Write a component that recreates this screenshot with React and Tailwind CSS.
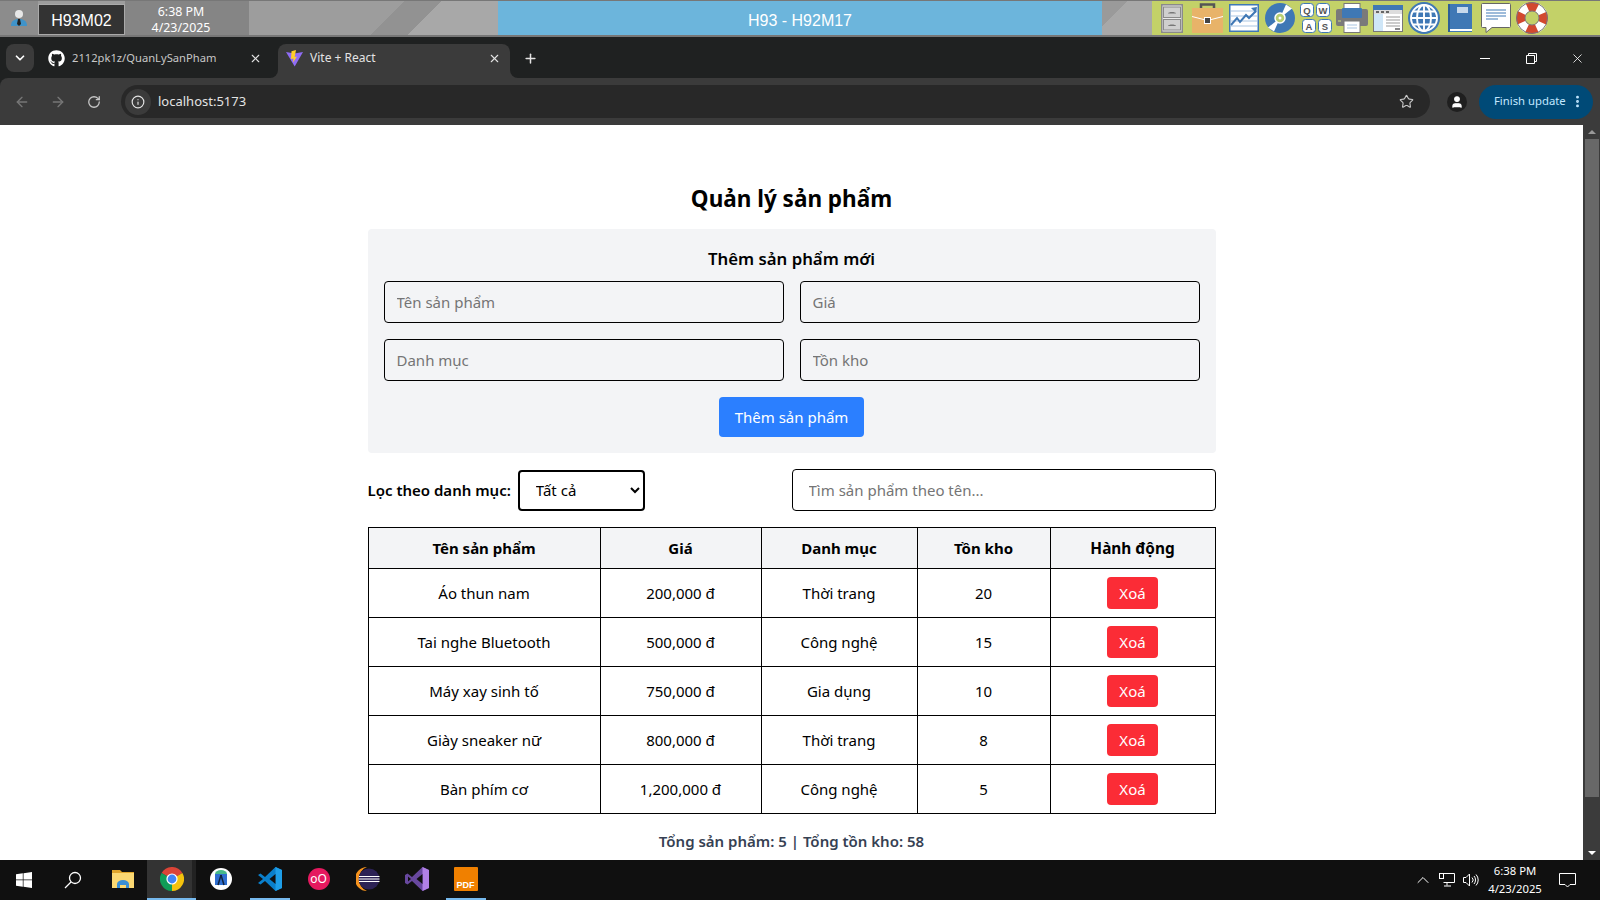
import { ArrowLeft, ArrowRight, ChevronDown, ChevronUp, Info, MoreVertical, Plus, RotateCw, Star, User, X } from 'lucide-react';
import { FaGithub } from 'react-icons/fa';

const products = [
  { name: 'Áo thun nam', price: '200,000 đ', category: 'Thời trang', stock: 20 },
  { name: 'Tai nghe Bluetooth', price: '500,000 đ', category: 'Công nghệ', stock: 15 },
  { name: 'Máy xay sinh tố', price: '750,000 đ', category: 'Gia dụng', stock: 10 },
  { name: 'Giày sneaker nữ', price: '800,000 đ', category: 'Thời trang', stock: 8 },
  { name: 'Bàn phím cơ', price: '1,200,000 đ', category: 'Công nghệ', stock: 5 },
];

const BLUE = '#3f78b5';

function Cabinet() {
  return (
    <svg width="22" height="29" viewBox="0 0 22 29">
      <rect x="0.750" y="0.750" width="20.500" height="27.500" fill="#e8e8e8" stroke="#8a8a8a" strokeWidth="1.500" />
      <rect x="2.500" y="3" width="17" height="10.500" fill="#cfcfcf" stroke="#8a8a8a" />
      <rect x="2.500" y="15.500" width="17" height="10.500" fill="#cfcfcf" stroke="#8a8a8a" />
      <path d="M7 9.500c0-2 8-2 8 0zM7 22c0-2 8-2 8 0z" fill="#777" />
    </svg>
  );
}

function Briefcase() {
  return (
    <svg width="31" height="30" viewBox="0 0 31 30">
      <path d="M9 6V1.500h13V6" fill="none" stroke="#555" strokeWidth="2.500" />
      <rect x="0" y="5" width="31" height="25" fill="#e8b369" />
      <path d="M0 13.500l15.500 4 15.500-4" fill="none" stroke="#fff" strokeWidth="1" />
      <rect x="12.500" y="14.500" width="6" height="6" fill="#444" stroke="#fff" />
    </svg>
  );
}

function ChartIcon() {
  return (
    <svg width="30" height="28" viewBox="0 0 30 28">
      <rect x="0.750" y="0.750" width="28.500" height="26.500" fill="#fff" stroke={BLUE} strokeWidth="1.500" />
      <path d="M2 7h26M2 12h26M2 17h26M2 22h26" stroke="#a9c5e2" />
      <path d="M2 21l6-7 3 4 6-7 3 3 7-7" fill="none" stroke={BLUE} strokeWidth="2" />
      <path d="M22 4l6-1-1 6z" fill={BLUE} />
    </svg>
  );
}

function Disc() {
  return (
    <svg width="30" height="30" viewBox="0 0 30 30">
      <circle cx="15" cy="15" r="15" fill={BLUE} />
      <path d="M15 15L21 1.500l6 4zM15 15L9 28.500l-6-4z" fill="#fff" />
      <circle cx="15" cy="15" r="5" fill="#b9cf73" stroke="#fff" strokeWidth="1.500" />
      <circle cx="15" cy="15" r="1.500" fill="#fff" />
    </svg>
  );
}

function Keys() {
  const keys = [['Q', 0, 0], ['W', 16, 0], ['A', 2, 16], ['S', 18, 16]];
  return (
    <svg width="32" height="30" viewBox="0 0 32 30">
      {keys.map(([k, x, y]) => (
        <g key={k}>
          <rect x={x + 0.500} y={y + 0.500} width="13" height="13" rx="3" fill="#fff" stroke={BLUE} />
          <text x={x + 7} y={y + 10.500} textAnchor="middle" fontSize="9.500" fontWeight="700" fill="#555" fontFamily="Liberation Sans, sans-serif">{k}</text>
        </g>
      ))}
    </svg>
  );
}

function Printer() {
  return (
    <svg width="32" height="30" viewBox="0 0 32 30">
      <rect x="8" y="0.500" width="16" height="10" fill="#fff" stroke="#777" />
      <rect x="0" y="6" width="32" height="17" rx="2" fill="#7a7a7a" />
      <rect x="6" y="5" width="20" height="10" rx="1" fill={BLUE} />
      <rect x="8" y="18" width="16" height="11.500" fill="#fff" stroke="#777" />
      <path d="M11 22h10M11 25h10" stroke="#a9c5e2" />
      <path d="M2 18h3" stroke="#cddb7a" />
    </svg>
  );
}

function WindowIcon() {
  return (
    <svg width="30" height="27" viewBox="0 0 30 27">
      <rect x="0.500" y="0.500" width="29" height="26" fill="#fff" stroke="#777" />
      <rect x="0" y="0" width="30" height="5" fill={BLUE} />
      <rect x="1" y="5" width="28" height="4" fill="#ddd" />
      <path d="M3 7h3M8 7h3M13 7h3" stroke="#666" strokeWidth="2" />
      <rect x="1" y="9" width="9" height="17" fill="#cfe6f7" />
      <path d="M13 12h14M13 15h14M13 18h14M13 21h14" stroke="#999" />
      <rect x="22" y="23" width="5" height="2" fill="#888" />
    </svg>
  );
}

function Globe() {
  return (
    <svg width="32" height="32" viewBox="0 0 32 32" fill="none" stroke="#fff" strokeWidth="1.900">
      <circle cx="16" cy="16" r="16" fill={BLUE} stroke="none" />
      <ellipse cx="16" cy="16" rx="7" ry="13" />
      <circle cx="16" cy="16" r="13" />
      <path d="M16 3v26M3 16h26M5 9.500h22M5 22.500h22" />
    </svg>
  );
}

function Book() {
  return (
    <svg width="24" height="28" viewBox="0 0 24 28">
      <rect x="0" y="0" width="24" height="28" fill={BLUE} />
      <rect x="2" y="25" width="22" height="2" fill="#fff" />
      <rect x="0" y="0" width="2" height="28" fill="#2e5f96" />
      <rect x="9" y="3" width="11" height="6" fill="#c7d9ec" />
    </svg>
  );
}

function Chat() {
  return (
    <svg width="30" height="30" viewBox="0 0 30 30">
      <path d="M1.500.5h27a1 1 0 0 1 1 1v22a1 1 0 0 1-1 1H11l-6 5v-5H1.500a1 1 0 0 1-1-1v-22a1 1 0 0 1 1-1z" fill="#fff" stroke="#666" />
      <path d="M5 7h20M5 10h20M5 13h20M5 16h12" stroke={BLUE} />
    </svg>
  );
}

function Lifebuoy() {
  return (
    <svg width="32" height="32" viewBox="0 0 32 32">
      <circle cx="16" cy="16" r="11.500" fill="none" stroke="#fff" strokeWidth="9" />
      <circle cx="16" cy="16" r="11.500" fill="none" stroke="#d2492f" strokeWidth="9" strokeDasharray="10 8.060" strokeDashoffset="5" />
      <circle cx="16" cy="16" r="15.500" fill="none" stroke="#777" />
      <circle cx="16" cy="16" r="7" fill="none" stroke="#777" />
    </svg>
  );
}

function ViteLogo() {
  return (
    <svg width="17" height="17" viewBox="0 0 17 17">
      <path d="M0 2l8.500 1.500L17 2 8.700 16.500z" fill="#8f6cf5" />
      <path d="M10 0L5.500 1.200 5 9l2.500-.6-.5 4L11 6.500 8.700 7z" fill="#ffd028" />
    </svg>
  );
}

function ChromeLogo() {
  return (
    <svg width="24" height="24" viewBox="0 0 24 24">
      <path d="M12 12L1.600 6A12 12 0 0 1 22.400 6z" fill="#db4437" />
      <path d="M12 12L22.400 6A12 12 0 0 1 12 24z" fill="#f4c20d" />
      <path d="M12 12L12 24A12 12 0 0 1 1.600 6z" fill="#0f9d58" />
      <circle cx="12" cy="12" r="5.600" fill="#fff" />
      <circle cx="12" cy="12" r="4.400" fill="#4285f4" />
    </svg>
  );
}

function WindowsLogo() {
  return (
    <svg width="16" height="16" viewBox="0 0 16 16" fill="#fff">
      <path d="M0 2.300l6.800-1V7.500H0zM7.500 1.200L16 0v7.500H7.500zM0 8.200h6.800v6.500L0 13.700zM7.500 8.200H16V16l-8.500-1.200z" />
    </svg>
  );
}

function SearchGlass() {
  return (
    <svg width="18" height="18" viewBox="0 0 18 18" fill="none" stroke="#fff" strokeWidth="1.300">
      <circle cx="11" cy="7" r="5.500" />
      <path d="M7 11l-6 6" />
    </svg>
  );
}

function Folder() {
  return (
    <svg width="22" height="20" viewBox="0 0 22 20">
      <path d="M0 1h8l2 2h12v16H0z" fill="#e0a52b" />
      <rect x="0" y="4" width="22" height="15" fill="#fbd872" />
      <path d="M5 15a6 4 0 0 1 12 0v4h-3v-3H8v3H5z" fill="#3a8fd6" />
    </svg>
  );
}

function AndroidStudio() {
  return (
    <svg width="22" height="22" viewBox="0 0 22 22">
      <circle cx="11" cy="11" r="11" fill="#fff" />
      <rect x="5" y="6" width="12" height="11" fill="#2f6fd0" />
      <path d="M5 6a6 4 0 0 1 12 0z" fill="#46b98a" />
      <path d="M11 7l-3 10M11 7l3 10" stroke="#10233f" strokeWidth="1.500" fill="none" />
    </svg>
  );
}

function VSCode() {
  return (
    <svg width="24" height="24" viewBox="0 0 24 24">
      <path d="M17.500 0L24 3v18l-6.500 3L7 14l-4.500 3.500L0 16l5-4-5-4 2.500-1.500L7 10z" fill="#0a7fcb" />
      <path d="M17.500 0L24 3v18l-6.500 3z" fill="#1e9ee8" />
      <path d="M17.500 7l-6 5 6 5z" fill="#101010" />
    </svg>
  );
}

function Gitkraken() {
  return (
    <div className="flex h-[22px] w-[22px] items-center justify-center rounded-full bg-[#e5195f] text-[12px] leading-none text-white">
      oO
    </div>
  );
}

function Eclipse() {
  return (
    <svg width="24" height="24" viewBox="0 0 24 24">
      <path d="M11 0a12 12 0 0 0 0 24A12 12 0 0 1 3 12 12 12 0 0 1 11 0z" fill="#f7941e" />
      <circle cx="13" cy="12" r="10.500" fill="#2c2255" />
      <path d="M3 9.500h20.500M2.500 12h21M3 14.500h20.500" stroke="#fff" strokeWidth="1.200" />
    </svg>
  );
}

function VisualStudio() {
  return (
    <svg width="24" height="24" viewBox="0 0 24 24">
      <path d="M17.500 0L24 3v18l-6.500 3L7 14l-4.500 3.500L0 16V8l2.500-1.500L7 10z" fill="#68489f" />
      <path d="M17.500 0L24 3v18l-6.500 3z" fill="#b180e6" />
      <path d="M17.500 7l-6 5 6 5zM3 9.500v5l3-2.500z" fill="#101010" />
    </svg>
  );
}

function FoxitPdf() {
  return (
    <div className="flex h-6 w-6 items-end justify-center rounded-[1px] bg-[#f08000] font-['Liberation_Sans',sans-serif] text-[9px] font-bold leading-[12px] text-white">
      PDF
    </div>
  );
}

function NetworkIcon() {
  return (
    <svg width="16" height="14" viewBox="0 0 16 14" fill="none" stroke="#fff">
      <path d="M4.500.5h11v9h-11M8 9.500v3M5 13h7" />
      <rect x="0.500" y="0.500" width="4" height="5" />
    </svg>
  );
}

function SpeakerIcon() {
  return (
    <svg width="16" height="14" viewBox="0 0 16 14" fill="none" stroke="#fff">
      <path d="M.5 4.500h2.500L6.500 1v12L3 9.500H.5z" />
      <path d="M9 4.500a3.500 3.500 0 0 1 0 5M11 3a6 6 0 0 1 0 8M13 1.500a8 8 0 0 1 0 11" />
    </svg>
  );
}

function NotifyIcon() {
  return (
    <svg width="17" height="15" viewBox="0 0 17 15" fill="none" stroke="#fff">
      <path d="M.5.500h16v11h-5.500L8.500 14 6 11.500H.5z" />
    </svg>
  );
}

function RemoteBar() {
  return (
    <div className="flex h-[37px] shrink-0 border-t border-b-2 border-t-[#777] border-b-[#777] bg-[#9d9d9d] font-['Liberation_Sans',sans-serif]">
      <div className="flex w-[38px] items-center justify-center bg-[#8c8c8c]">
        <svg width="16" height="18" viewBox="0 0 16 18">
          <circle cx="8" cy="5" r="4" fill="#e7e7e7" />
          <path d="M0 17c0-5 3-7 8-7s8 2 8 7z" fill="#3f93c9" />
          <path d="M7 10h2l1 5-2 2-2-2z" fill="#222" />
        </svg>
      </div>
      <div className="mt-[3px] flex w-[87px] items-center justify-center border border-[#aaa] bg-[#333] pt-[2px] text-[16px] text-white">
        H93M02
      </div>
      <div className="flex w-[124px] flex-col items-center justify-center bg-[#858585] pr-[12px] pt-[4px] text-[12.400px] leading-[16px] text-white font-['Noto_Sans',sans-serif]">
        <span>6:38 PM</span>
        <span>4/23/2025</span>
      </div>
      <div className="w-[249px] bg-[linear-gradient(135deg,#9d9d9d_55%,#929292_55%,#929292_68%,#a8a8a8_68%)]" />
      <div className="flex w-[604px] items-center justify-center bg-[#6cb5dc] pt-[5px] text-[16px] text-white">H93 - H92M17</div>
      <div className="w-[50px] bg-[linear-gradient(135deg,#9a9a9a_30%,#a8a8a8_30%)]" />
      <div className="flex flex-1 items-center gap-[5px] bg-[#c3d168] pl-[9px]">
        <Cabinet />
        <div className="ml-[4px]"><Briefcase /></div>
        <div className="ml-px"><ChartIcon /></div>
        <div className="ml-px"><Disc /></div>
        <Keys />
        <div className="-ml-px"><Printer /></div>
        <WindowIcon />
        <Globe />
        <div className="ml-[3px]"><Book /></div>
        <div className="ml-[4px]"><Chat /></div>
        <Lifebuoy />
      </div>
    </div>
  );
}

function BrowserChrome() {
  return (
    <div className="shrink-0 bg-[#1f2121] font-['Noto_Sans',sans-serif]">
      <div className="flex h-[41px] items-end">
        <div className="mb-[6px] ml-[6px] flex h-7 w-7 items-center justify-center rounded-lg bg-[#3b3b3b] text-white">
          <ChevronDown size={14} strokeWidth={3} />
        </div>
        <div className="flex h-[34px] flex-1 bg-[linear-gradient(to_bottom,#1f2121_50%,#3b3b3b_50%)]">
          <div className="flex w-[244px] items-center rounded-br-lg bg-[#1f2121] pb-[5px] pl-[14px] pr-4 text-[11.200px] text-[#c7c7c7]">
            <FaGithub size={17} className="text-white" />
            <span className="ml-[7px] flex-1">2112pk1z/QuanLySanPham</span>
            <X size={13} className="text-[#e3e3e3]" />
          </div>
          <div className="flex w-[232px] items-center rounded-t-lg bg-[#3b3b3b] pb-[6px] pl-2 pr-[9px] text-[12px] text-[#e3e3e3]">
            <ViteLogo />
            <span className="ml-[7px] flex-1">Vite + React</span>
            <X size={13} />
          </div>
          <div className="flex flex-1 items-center rounded-bl-lg bg-[#1f2121] pb-[6px] pl-[13px] text-white">
            <Plus size={15} strokeWidth={2.400} className="text-[#e3e3e3]" />
            <div className="flex-1" />
            <div className="flex w-[46px] justify-center"><div className="h-px w-[10px] bg-white" /></div>
            <div className="flex w-[46px] justify-center">
              <svg width="11" height="11" viewBox="0 0 11 11" fill="none" stroke="#fff">
                <path d="M2.500 2.500v-2h8v8h-2M.5 2.500h8v8h-8z" />
              </svg>
            </div>
            <div className="flex w-[46px] justify-center"><X size={15} strokeWidth={1.300} /></div>
          </div>
        </div>
      </div>
      <div className="flex h-[47px] items-center rounded-tl-lg bg-[#3b3b3b] pl-[14px] pr-[7px]">
        <ArrowLeft size={16} className="text-[#777]" />
        <ArrowRight size={16} className="ml-5 text-[#777]" />
        <RotateCw size={14} strokeWidth={2.200} className="ml-[21px] text-[#c7c7c7]" />
        <div className="ml-[20px] flex h-[33px] flex-1 items-center rounded-full bg-[#282828]">
          <div className="ml-[4px] flex h-[26px] w-[26px] items-center justify-center rounded-full bg-[#3b3b3b]">
            <Info size={14} className="text-[#e3e3e3]" />
          </div>
          <span className="ml-[7px] flex-1 text-[13px] text-[#e3e3e3]">localhost:5173</span>
          <Star size={15} strokeWidth={1.800} className="mr-[16px] text-[#c7c7c7]" />
        </div>
        <div className="ml-[17px] flex h-5 w-5 items-center justify-center rounded-full bg-[#1f1f1f]">
          <User size={14} fill="#fff" className="text-white" />
        </div>
        <div className="ml-[12px] flex h-[34px] w-[114px] items-center rounded-full bg-[#004a77] pl-[15px] text-[11.300px] text-[#c2e7ff]">
          <span className="flex-1">Finish update</span>
          <MoreVertical size={15} strokeWidth={2.600} className="mr-2" />
        </div>
      </div>
    </div>
  );
}

function ProductPage() {
  return (
    <main className="mx-auto w-[896px] px-6 pt-[58px] text-[15px] text-black font-['Noto_Sans',sans-serif]">
      <h1 className="mb-[14px] text-center text-[22.500px] font-bold leading-8">Quản lý sản phẩm</h1>

      <section className="rounded bg-gray-100 p-4">
        <h2 className="mb-2 text-center text-[16.800px] font-semibold leading-7">Thêm sản phẩm mới</h2>
        <div className="grid grid-cols-2 gap-4">
          {['Tên sản phẩm', 'Giá', 'Danh mục', 'Tồn kho'].map((p) => (
            <input key={p} placeholder={p} className="h-[42px] rounded border border-black px-3 placeholder:text-[#757575]" />
          ))}
        </div>
        <div className="mt-4 text-center">
          <button className="h-10 w-[145px] rounded bg-blue-500 text-white">Thêm sản phẩm</button>
        </div>
      </section>

      <div className="my-4 flex items-center justify-between">
        <div className="flex items-center">
          <label className="mr-[7px] font-semibold">Lọc theo danh mục:</label>
          <select className="h-[41px] w-[127px] rounded border-2 border-black bg-white px-3">
            <option>Tất cả</option>
          </select>
        </div>
        <input placeholder="Tìm sản phẩm theo tên..." className="h-[42px] w-[424px] rounded border border-black px-4 placeholder:text-[#757575]" />
      </div>

      <table className="w-full table-fixed border-collapse border border-black text-center">
        <thead className="bg-gray-100">
          <tr className="h-[41px]">
            <th className="w-[232px] border border-black pt-px">Tên sản phẩm</th>
            <th className="w-[161px] border border-black pt-px">Giá</th>
            <th className="w-[156px] border border-black pt-px">Danh mục</th>
            <th className="w-[133px] border border-black pt-px">Tồn kho</th>
            <th className="border border-black pt-px text-[15.400px]">Hành động</th>
          </tr>
        </thead>
        <tbody>
          {products.map((p) => (
            <tr key={p.name}>
              <td className="border border-black p-2">{p.name}</td>
              <td className="border border-black p-2">{p.price}</td>
              <td className="border border-black p-2">{p.category}</td>
              <td className="border border-black p-2">{p.stock}</td>
              <td className="border border-black p-2">
                <button className="h-8 w-[51px] rounded bg-red-500 text-white">Xoá</button>
              </td>
            </tr>
          ))}
        </tbody>
      </table>

      <p className="mt-4 text-center font-semibold text-gray-700">Tổng sản phẩm: 5 | Tổng tồn kho: 58</p>
    </main>
  );
}

function Scrollbar() {
  return (
    <div className="flex w-[17px] shrink-0 flex-col items-center bg-[#3b3b3b] py-[5px]">
      <div className="h-0 w-0 border-x-[4px] border-b-[4px] border-x-transparent border-b-[#999]" />
      <div className="mt-[5px] h-[658px] w-[14px] bg-[#686868]" />
      <div className="flex-1" />
      <div className="h-0 w-0 border-x-[4px] border-t-[4px] border-x-transparent border-t-[#fff]" />
    </div>
  );
}

function TaskIcon({ children, open }) {
  return (
    <div className="flex h-10 w-[49px] justify-center">
      <div className={`flex h-10 w-10 items-center justify-center border-b-[2px] ${open ? 'border-b-[#76b9ed]' : 'border-b-transparent'}`}>
        {children}
      </div>
    </div>
  );
}

function Taskbar() {
  return (
    <div className="flex h-10 shrink-0 items-center bg-[#101010] font-['Noto_Sans',sans-serif] text-white">
      <div className="flex h-10 w-[48px] items-center justify-center"><WindowsLogo /></div>
      <div className="flex h-10 w-[50px] items-center justify-center"><SearchGlass /></div>
      <TaskIcon><Folder /></TaskIcon>
      <div className="flex h-10 w-[49px]">
        <div className="flex h-10 w-[45px] items-center justify-center border-b-[2px] border-b-[#76b9ed] bg-[#333] pl-[5px]">
          <ChromeLogo />
        </div>
        <div className="w-[4px] border-b-[2px] border-b-[#76b9ed] bg-[#222]" />
      </div>
      <TaskIcon><AndroidStudio /></TaskIcon>
      <TaskIcon open><VSCode /></TaskIcon>
      <TaskIcon><Gitkraken /></TaskIcon>
      <TaskIcon><Eclipse /></TaskIcon>
      <TaskIcon><VisualStudio /></TaskIcon>
      <TaskIcon open><FoxitPdf /></TaskIcon>
      <div className="flex-1" />
      <ChevronUp size={20} strokeWidth={1.200} />
      <div className="ml-[6px]"><NetworkIcon /></div>
      <div className="ml-2"><SpeakerIcon /></div>
      <div className="ml-[5px] flex w-[62px] flex-col items-center text-[11.300px] leading-[18px]">
        <span>6:38 PM</span>
        <span>4/23/2025</span>
      </div>
      <div className="ml-[13px] mr-[24px]"><NotifyIcon /></div>
    </div>
  );
}

export default function App() {
  return (
    <div className="flex h-screen flex-col overflow-hidden bg-white">
      <RemoteBar />
      <BrowserChrome />
      <div className="flex min-h-0 flex-1">
        <div className="min-w-0 flex-1 overflow-hidden">
          <ProductPage />
        </div>
        <Scrollbar />
      </div>
      <Taskbar />
    </div>
  );
}
